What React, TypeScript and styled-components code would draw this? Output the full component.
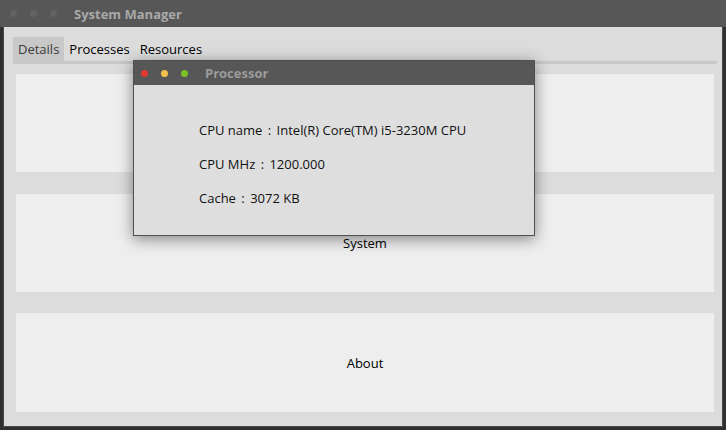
import styled, { createGlobalStyle } from 'styled-components';

const GlobalStyle = createGlobalStyle`
  html, body {
    margin: 0;
    padding: 0;
    background: #2f2f2f;
  }
  body {
    font-family: "Open Sans", "DejaVu Sans", sans-serif;
    font-size: 13px;
    color: #1a1a1a;
  }
`;

const Screen = styled.div`
  position: relative;
  width: 726px;
  height: 430px;
  overflow: hidden;
  background: #2f2f2f;
`;

const TitleBar = styled.div`
  height: 27px;
  display: flex;
  align-items: center;
  padding-left: 10px;
  background: #575757;
`;

const Dot = styled.span<{ $color: string }>`
  width: 7px;
  height: 7px;
  border-radius: 50%;
  background: ${(p) => p.$color};
  margin-right: 13px;
`;

const Title = styled.span<{ $color?: string }>`
  margin-left: 4px;
  font-weight: bold;
  font-size: 13px;
  color: ${(p) => p.$color || '#a9a9a9'};
`;

const Body = styled.div`
  margin: 0 3px;
  height: 400px;
  box-sizing: border-box;
  border: 1px solid #4a4a4a;
  border-top: none;
  background: #dcdcdc;
  padding-top: 10px;
`;

const TabBar = styled.div`
  display: flex;
  margin: 0 5px 0 9px;
  border-bottom: 3px solid #c8c8c8;
  height: 24px;
`;

const Tab = styled.div<{ $active?: boolean }>`
  display: flex;
  align-items: center;
  padding: 0 5px;
  background: ${(p) => (p.$active ? '#c8c8c8' : 'transparent')};
  color: ${(p) => (p.$active ? '#3a3a3a' : '#000')};
`;

const Panels = styled.div`
  display: grid;
  grid-template-rows: 98px 98px 99px;
  row-gap: 21.5px;
  margin: 10px 8px 0 12px;
`;

const Panel = styled.div`
  display: flex;
  align-items: center;
  justify-content: center;
  background: #eeeeee;
  color: #000;
`;

const Dialog = styled.div`
  position: absolute;
  left: 133px;
  top: 60px;
  width: 402px;
  height: 176px;
  box-sizing: border-box;
  border: 1px solid #505050;
  background: #dedede;
  box-shadow: 0 3px 14px rgba(0, 0, 0, 0.45);
`;

const DialogBar = styled(TitleBar)`
  height: 24px;
  padding-left: 7px;
`;

const InfoList = styled.div`
  display: flex;
  flex-direction: column;
  gap: 16px;
  padding: 36px 0 0 65px;
  color: #111;
`;

const InfoLine = styled.div`
  line-height: 18px;
`;

const Sep = styled.span`
  margin: 0 2px;
`;

const info = [
  ['CPU name', 'Intel(R) Core(TM) i5-3230M CPU'],
  ['CPU MHz', '1200.000'],
  ['Cache', '3072 KB'],
];

export default function App() {
  return (
    <>
      <GlobalStyle />
      <Screen>
        <TitleBar>
          <Dot $color="#626262" />
          <Dot $color="#626262" />
          <Dot $color="#626262" />
          <Title>System Manager</Title>
        </TitleBar>
        <Body>
          <TabBar>
            <Tab $active>Details</Tab>
            <Tab>Processes</Tab>
            <Tab>Resources</Tab>
          </TabBar>
          <Panels>
            <Panel>Processor</Panel>
            <Panel>System</Panel>
            <Panel>About</Panel>
          </Panels>
        </Body>
        <Dialog>
          <DialogBar>
            <Dot $color="#e0392e" />
            <Dot $color="#f2c04f" />
            <Dot $color="#7cc226" />
            <Title $color="#9c9c9c">Processor</Title>
          </DialogBar>
          <InfoList>
            {info.map(([k, v]) => (
              <InfoLine key={k}>
                {k} <Sep>:</Sep> {v}
              </InfoLine>
            ))}
          </InfoList>
        </Dialog>
      </Screen>
    </>
  );
}
